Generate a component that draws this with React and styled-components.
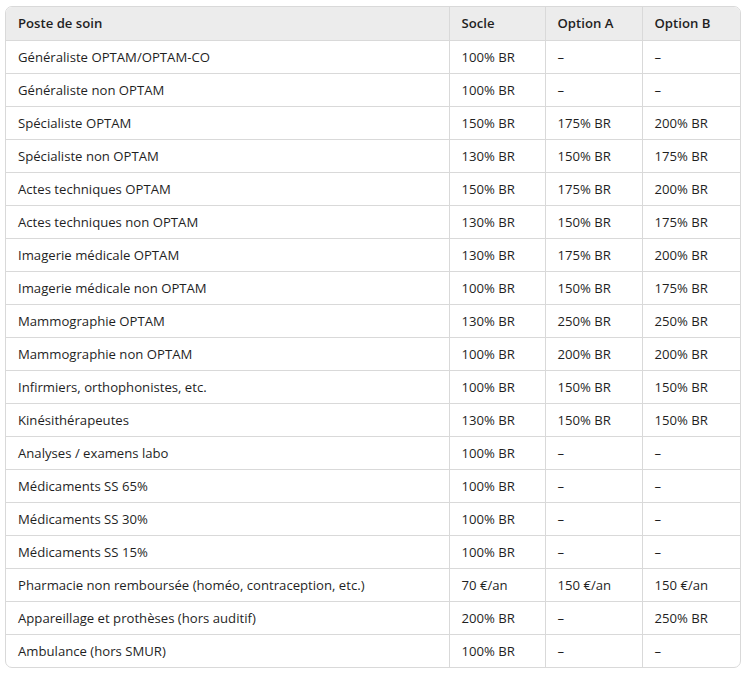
import React from "react";
import styled, { createGlobalStyle } from "styled-components";

const GlobalStyle = createGlobalStyle`
  body {
    margin: 0;
    background: #ffffff;
    font-family: "Open Sans", "Noto Sans", sans-serif;
    color: #1f1f1f;
  }
`;

const Page = styled.div`
  padding: 6px 0 0 5px;
`;

const Frame = styled.div`
  width: 736px;
  border: 1px solid #d9d9d9;
  border-radius: 7px;
  overflow: hidden;
  box-sizing: border-box;
`;

const Table = styled.table`
  width: 100%;
  border-collapse: collapse;
  table-layout: fixed;
  font-size: 13.15px;
`;

const Head = styled.th`
  background: #ececec;
  font-weight: 600;
  text-align: left;
  height: 33px;
  padding: 0 12px;
  border-left: 1px solid #d9d9d9;
  border-bottom: 1px solid #d9d9d9;
  box-sizing: border-box;
  &:first-child {
    border-left: none;
  }
`;

const Cell = styled.td`
  height: 33px;
  padding: 0 12px;
  border-left: 1px solid #d9d9d9;
  border-top: 1px solid #d9d9d9;
  white-space: nowrap;
  box-sizing: border-box;
  &:first-child {
    border-left: none;
  }
`;

const Row = styled.tr`
  &:nth-child(1) td {
    border-top: none;
  }
`;

const rows = [
  ["Généraliste OPTAM/OPTAM-CO", "100% BR", "–", "–"],
  ["Généraliste non OPTAM", "100% BR", "–", "–"],
  ["Spécialiste OPTAM", "150% BR", "175% BR", "200% BR"],
  ["Spécialiste non OPTAM", "130% BR", "150% BR", "175% BR"],
  ["Actes techniques OPTAM", "150% BR", "175% BR", "200% BR"],
  ["Actes techniques non OPTAM", "130% BR", "150% BR", "175% BR"],
  ["Imagerie médicale OPTAM", "130% BR", "175% BR", "200% BR"],
  ["Imagerie médicale non OPTAM", "100% BR", "150% BR", "175% BR"],
  ["Mammographie OPTAM", "130% BR", "250% BR", "250% BR"],
  ["Mammographie non OPTAM", "100% BR", "200% BR", "200% BR"],
  ["Infirmiers, orthophonistes, etc.", "100% BR", "150% BR", "150% BR"],
  ["Kinésithérapeutes", "130% BR", "150% BR", "150% BR"],
  ["Analyses / examens labo", "100% BR", "–", "–"],
  ["Médicaments SS 65%", "100% BR", "–", "–"],
  ["Médicaments SS 30%", "100% BR", "–", "–"],
  ["Médicaments SS 15%", "100% BR", "–", "–"],
  ["Pharmacie non remboursée (homéo, contraception, etc.)", "70 €/an", "150 €/an", "150 €/an"],
  ["Appareillage et prothèses (hors auditif)", "200% BR", "–", "250% BR"],
  ["Ambulance (hors SMUR)", "100% BR", "–", "–"],
];

const App = () => {
  return (
    <Page>
      <GlobalStyle />
      <Frame>
        <Table>
          <colgroup>
            <col style={{ width: 443 }} />
            <col style={{ width: 96 }} />
            <col style={{ width: 97 }} />
            <col />
          </colgroup>
          <thead>
            <tr>
              <Head>Poste de soin</Head>
              <Head>Socle</Head>
              <Head>Option A</Head>
              <Head>Option B</Head>
            </tr>
          </thead>
          <tbody>
            {rows.map((r) => (
              <Row key={r[0]}>
                {r.map((c, i) => (
                  <Cell key={i}>{c}</Cell>
                ))}
              </Row>
            ))}
          </tbody>
        </Table>
      </Frame>
    </Page>
  );
};

export default App;
